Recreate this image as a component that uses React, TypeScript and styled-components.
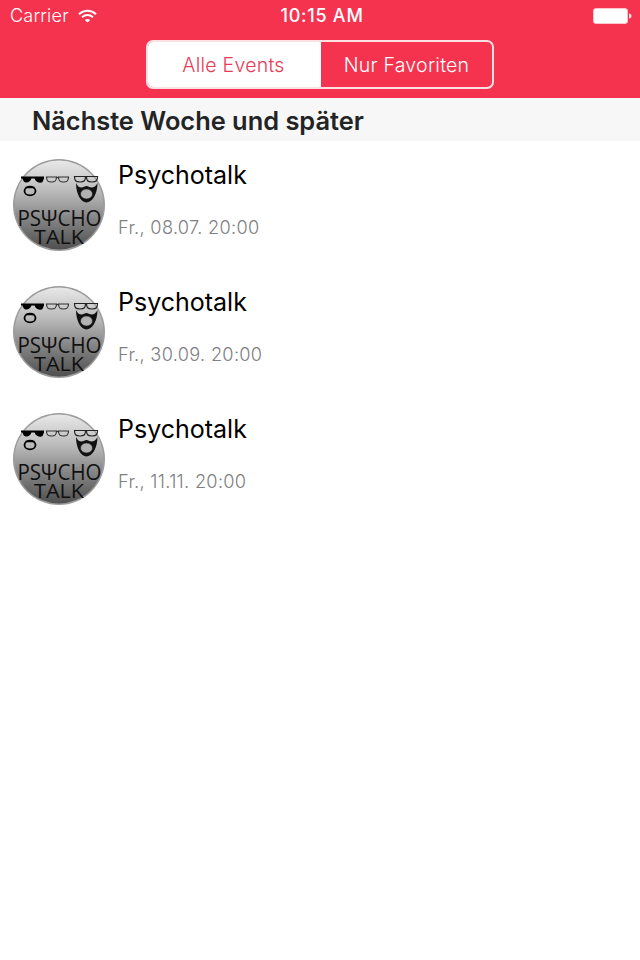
import React from "react";
import styled, { createGlobalStyle } from "styled-components";

const Global = createGlobalStyle`
  html, body { margin: 0; padding: 0; background: #fff; }
  body { font-family: Inter, "Liberation Sans", sans-serif; -webkit-font-smoothing: antialiased; }
`;

const Page = styled.div`
  width: 640px;
  height: 960px;
  background: #fff;
  overflow: hidden;
`;

const Header = styled.header`
  height: 98px;
  background: #f5334f;
  box-sizing: border-box;
  display: flex;
  flex-direction: column;
`;

const StatusBar = styled.div`
  height: 40px;
  padding: 0 8px 9px 10px;
  display: grid;
  grid-template-columns: 1fr auto 1fr;
  align-items: center;
  color: #fff;
  box-sizing: border-box;
`;

const StatusLeft = styled.div`
  display: flex;
  align-items: center;
  gap: 9px;
  font-size: 18px;
  font-weight: 350;
  letter-spacing: 0.2px;
  color: #fff;
`;

const Clock = styled.div`
  font-size: 18px;
  font-weight: 500;
  letter-spacing: 0.75px;
  padding-left: 2px;
`;

const StatusRight = styled.div`
  display: flex;
  justify-content: flex-end;
`;

const Segments = styled.div`
  align-self: center;
  width: 348px;
  height: 49px;
  box-sizing: border-box;
  border: 2px solid #fde0e4;
  border-radius: 7px;
  display: flex;
  overflow: hidden;
`;

const Segment = styled.div<{ $active?: boolean }>`
  box-sizing: border-box;
  flex: ${(p) => (p.$active ? "0 0 173px" : "1")};
  background: ${(p) => (p.$active ? "#fff" : "transparent")};
  color: ${(p) => (p.$active ? "#e93a56" : "#fff")};
  display: flex;
  align-items: center;
  justify-content: center;
  font-size: 19.5px;
  font-weight: 350;
  letter-spacing: 0.25px;
  padding-right: ${(p) => (p.$active ? "2px" : "0")};
`;

const SectionHead = styled.div`
  height: 43px;
  background: #f7f7f7;
  padding: 2px 0 0 32px;
  box-sizing: border-box;
  display: flex;
  align-items: center;
  font-size: 25.4px;
  font-weight: 600;
  color: #222426;
`;

const List = styled.div`
  display: flex;
  flex-direction: column;
`;

const Row = styled.div`
  height: 127px;
  padding: 18px 0 0 13px;
  box-sizing: border-box;
  display: flex;
  gap: 13px;
`;

const Texts = styled.div`
  display: flex;
  flex-direction: column;
`;

const Title = styled.div`
  font-size: 25px;
  font-weight: 400;
  line-height: 32px;
  color: #000;
`;

const Sub = styled.div`
  margin-top: 24px;
  font-size: 18.2px;
  font-weight: 350;
  line-height: 24px;
  color: #808084;
  letter-spacing: 0.3px;
`;

const Wifi = () => (
  <svg width="19" height="14" viewBox="0 0 19 14" fill="none" stroke="#fff">
    <path d="M1 5.200C6 .6 13 .6 18 5.200" strokeWidth="2" />
    <path d="M4 8.200c3.200-2.900 7.800-2.900 11 0" strokeWidth="2" />
    <path d="M6.800 10.900c1.600-1.300 3.800-1.300 5.400 0L9.500 13.600z" fill="#fff" stroke="none" />
  </svg>
);

const Battery = () => (
  <svg width="39" height="16" viewBox="0 0 39 16">
    <rect x="0.5" y="0.5" width="34" height="15" rx="2.500" fill="#fff" stroke="#fcc5cd" strokeWidth="1" />
    <path d="M36 5.500c1.500 .3 2.500 1 2.500 2.500s-1 2.200-2.500 2.500z" fill="#fde0e4" />
  </svg>
);

const Logo = ({ id }: { id: string }) => (
  <svg width="92" height="92" viewBox="0 0 92 92" style={{ flex: "none" }}>
    <defs>
      <linearGradient id={id} x1="0" y1="0" x2="0" y2="1">
        <stop offset="0" stopColor="#e8e8e8" />
        <stop offset="0.35" stopColor="#bababa" />
        <stop offset="0.65" stopColor="#858585" />
        <stop offset="1" stopColor="#505050" />
      </linearGradient>
    </defs>
    <circle cx="46" cy="46" r="46" fill="#9c9c9c" />
    <circle cx="46" cy="46" r="44.500" fill={`url(#${id})`} />
    {/* sunglasses */}
    <path d="M8 17.500h23v2l-1.500 3.500c-1.500 1.500-6.500 1-8-3.500h-3c-1.500 4.500-6.500 5-8 2.500L9.500 19.500H8z" fill="#000" />
    {/* goatee */}
    <ellipse cx="17" cy="32" rx="5.500" ry="4.400" fill="none" stroke="#000" strokeWidth="1.800" />
    <path d="M12.500 28.500h9" stroke="#000" strokeWidth="1.500" />
    {/* middle glasses */}
    <g fill="none" stroke="#333" strokeWidth="1.200">
      <path d="M33.500 18h10c0 3.500-1 5-5 5s-5-1.500-5-5z" />
      <path d="M45.500 18h10c0 3.500-1 5-5 5s-5-1.500-5-5z" />
      <path d="M43.500 18.500h2" />
    </g>
    {/* right head: glasses and beard */}
    <g fill="none" stroke="#222" strokeWidth="1.200">
      <path d="M61.500 17.500h11c0 4-1 5.500-5.500 5.500s-5.500-1.500-5.500-5.500z" />
      <path d="M73.500 17.500h11c0 4-1 5.500-5.500 5.500s-5.500-1.500-5.500-5.500z" />
    </g>
    <path d="M63 24c0 11 5 19.500 10.500 19.500S84.500 35 84.500 24c-1.500 3-3.500 4.500-6 4.500-2 0-3.500-1.500-5-1.500s-3 1.500-5 1.500c-2.500 0-4-1.500-5.500-4.500z" fill="#111" />
    <ellipse cx="73.500" cy="35" rx="6" ry="5" fill="#b2b2b2" stroke="#222" strokeWidth="0.600" />
    {/* lettering */}
    <text x="46.500" y="67" textAnchor="middle" fontFamily="'Open Sans', sans-serif" fontWeight="400" fontSize="21" fill="#101010" textLength="84" lengthAdjust="spacingAndGlyphs">PSΨCHO</text>
    <text x="46" y="84.500" textAnchor="middle" fontFamily="'Open Sans', sans-serif" fontWeight="400" fontSize="20" fill="#101010" textLength="50" lengthAdjust="spacingAndGlyphs">TALK</text>
  </svg>
);

const events = ["Fr., 08.07. 20:00", "Fr., 30.09. 20:00", "Fr., 11.11. 20:00"];

export default function App() {
  return (
    <Page>
      <Global />
      <Header>
        <StatusBar>
          <StatusLeft>
            <span>Carrier</span>
            <Wifi />
          </StatusLeft>
          <Clock>10:15 AM</Clock>
          <StatusRight>
            <Battery />
          </StatusRight>
        </StatusBar>
        <Segments>
          <Segment $active>Alle Events</Segment>
          <Segment>Nur Favoriten</Segment>
        </Segments>
      </Header>
      <SectionHead>Nächste Woche und später</SectionHead>
      <List>
        {events.map((e, i) => (
          <Row key={e}>
            <Logo id={`logo-grad-${i}`} />
            <Texts>
              <Title>Psychotalk</Title>
              <Sub>{e}</Sub>
            </Texts>
          </Row>
        ))}
      </List>
    </Page>
  );
}
